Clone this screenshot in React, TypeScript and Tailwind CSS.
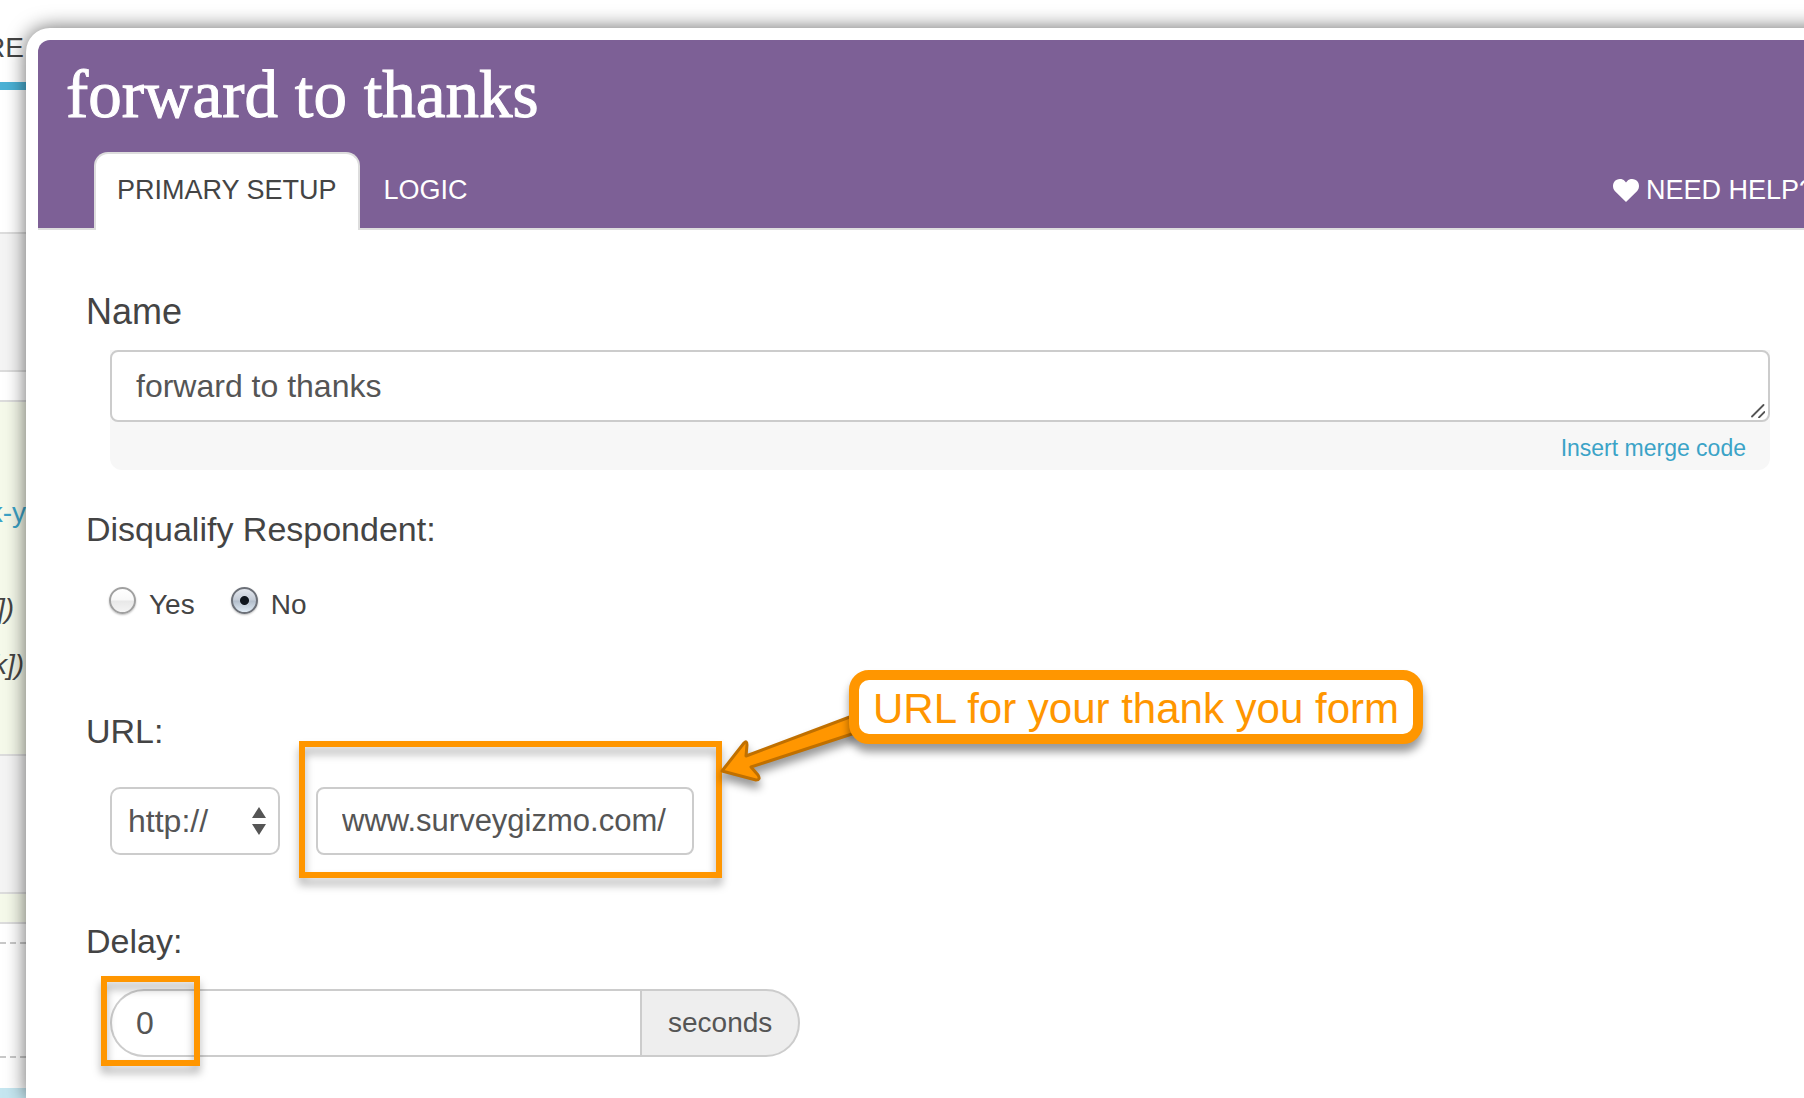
import React from "react";

const annotationShadow = "drop-shadow-[0_7px_4px_rgba(0,0,0,0.3)]";

function Rule() {
  return <div className="h-0.5 shrink-0 bg-[#dcdcdc]" />;
}

function PageBehind() {
  return (
    <aside className="flex w-[26px] shrink-0 flex-col overflow-hidden whitespace-nowrap text-[#444]">
      <div className="flex h-[82px] shrink-0 justify-end pt-7 pr-0.5 text-[28px] leading-10">SHARE</div>
      <div className="h-2 shrink-0 bg-[#4bb1d5]" />
      <div className="h-[142px] shrink-0" />
      <Rule />
      <div className="h-[136px] shrink-0 bg-[#f4f4f4]" />
      <Rule />
      <div className="h-7 shrink-0" />
      <Rule />
      <div className="flex h-[352px] shrink-0 flex-col items-end bg-[#f5f9ea] pt-[91px] text-[28px] leading-10">
        <a href="#thank-you" className="text-[#3ba3c7]">thank-y</a>
        <em className="mt-14 pr-3">link])</em>
        <em className="mt-4 pr-0.5">link])</em>
      </div>
      <Rule />
      <div className="h-[136px] shrink-0 bg-[#f4f4f4]" />
      <Rule />
      <div className="h-7 shrink-0 bg-[#f5f9ea]" />
      <Rule />
      <div className="mt-[18px] h-[116px] shrink-0 border-y-2 border-dashed border-[#c8c8c8]" />
      <div className="mt-[30px] min-h-2 flex-1 bg-[#c5e6f0]" />
    </aside>
  );
}

function Header() {
  return (
    <header className="rounded-tl-xl border-b-2 border-[#ddd] bg-[#7d6096] pt-[18px] text-white">
      <h1 className="pl-7 font-['Liberation_Serif',serif] text-[67px] leading-[72px] [-webkit-text-stroke:1px_white]">
        forward to thanks
      </h1>
      <nav className="-mb-0.5 mt-[22px] flex pl-14 pr-[18px] text-[27px] leading-[72px]">
        <button className="rounded-t-[14px] border-2 border-b-0 border-[#ddd] bg-white px-[21px] pb-1 text-[#444]">
          PRIMARY SETUP
        </button>
        <button className="border-t-2 border-transparent px-6 pb-1">LOGIC</button>
        <a href="#help" className="ml-auto flex items-center gap-[7px] border-t-2 border-transparent pb-1">
          <svg viewBox="0 0 26 23" className="h-[23px] w-[26px] fill-white" aria-hidden="true">
            <path d="M13 23 1.800 12C-.4 9.600-.6 5.500 1.300 2.800 3.700-.5 9-1 11.700 2L13 3.500 14.300 2C17-1 22.300-.5 24.700 2.800c1.900 2.700 1.700 6.800-.5 9.200z" />
          </svg>
          NEED HELP?
        </a>
      </nav>
    </header>
  );
}

function Radio({ label, defaultChecked }: { label: string; defaultChecked?: boolean }) {
  return (
    <label className="flex items-start gap-[13px] text-[28px] leading-10">
      <input
        type="radio"
        name="disqualify"
        defaultChecked={defaultChecked}
        className="mt-0.5 size-[27px] appearance-none rounded-full border-2 border-[#a0a0a0] bg-[linear-gradient(#fff_0%,#f8f8f8_48%,#e8e8e8_52%,#f4f4f4_100%)] shadow-[0_1px_2px_rgba(0,0,0,0.25)] checked:border-[#6c7078] checked:bg-[radial-gradient(circle,#10161e_0_4px,transparent_5px),linear-gradient(#e3e7ee_0%,#c3cbd6_48%,#b2bdca_52%,#e0ebf5_100%)]"
      />
      {label}
    </label>
  );
}

export default function App() {
  return (
    <div className="flex min-h-screen overflow-hidden bg-white font-['Liberation_Sans',Arial,sans-serif]">
      <PageBehind />
      <main className="-mr-10 mt-7 min-w-0 flex-1 rounded-tl-3xl bg-white p-3 pb-0 text-[#444] shadow-[0_0_20px_rgba(0,0,0,0.6)]">
        <Header />
        <form className="pt-[62px] pr-[62px] pb-8 pl-12 text-[34px] leading-10">
          <label htmlFor="name" className="block text-[36px]">Name</label>
          <div className="mt-[18px] ml-6 rounded-b-xl bg-[#f7f7f7]">
            <div className="relative">
              <textarea
                id="name"
                rows={1}
                defaultValue="forward to thanks"
                className="block h-[72px] w-full resize-none overflow-hidden rounded-lg border-2 border-[#ccc] bg-white px-6 py-4 text-[32px] leading-9 text-[#555]"
              />
              <svg viewBox="0 0 14 14" className="absolute right-[5px] bottom-1 size-3.5" aria-hidden="true">
                <path d="M1 12.500 12.500 1M8 13.500 13.500 8" stroke="#555" strokeWidth="1.800" strokeLinecap="round" />
              </svg>
            </div>
            <div className="flex h-12 items-center justify-end pt-1 pr-6 text-[23px] leading-7">
              <a href="#merge" className="text-[#3ba3c7]">Insert merge code</a>
            </div>
          </div>

          <div role="radiogroup" aria-labelledby="disqualify-label">
            <div id="disqualify-label" className="mt-[39px]">Disqualify Respondent:</div>
            <div className="mt-9 ml-[23px] flex gap-9">
              <Radio label="Yes" />
              <Radio label="No" defaultChecked />
            </div>
          </div>

          <label htmlFor="url" className="mt-[86px] block">URL:</label>
          <div className="mt-9 ml-6 flex gap-9 text-[32px] text-[#555]">
            <div className="relative">
              <select
                aria-label="Protocol"
                className="h-[68px] w-[170px] appearance-none rounded-[10px] border-2 border-[#ccc] bg-white pl-4"
              >
                <option>http://</option>
                <option>https://</option>
              </select>
              <svg viewBox="0 0 14 28" className="pointer-events-none absolute top-5 right-3.5 h-7 w-3.5 fill-[#555]" aria-hidden="true">
                <path d="M7 0 14 11H0zM0 17H14L7 28z" />
              </svg>
            </div>
            <div className="relative">
              <input
                id="url"
                type="text"
                defaultValue="www.surveygizmo.com/"
                className="h-[68px] w-[378px] rounded-lg border-2 border-[#ccc] bg-white px-6 text-[31px]"
              />
              <div className={"pointer-events-none absolute -top-[46px] -left-[17px] h-[137px] w-[423px] border-[6px] border-[#ff9600] " + annotationShadow} />
              <svg
                viewBox="0 0 140 70"
                className="pointer-events-none absolute -top-[74px] left-[402px] h-[70px] w-[140px] drop-shadow-[0_7px_4px_rgba(0,0,0,0.4)]"
                aria-hidden="true"
              >
                <path
                  d="M4 58 26 30Q29 27 29 32L28 43 137 2V20L33 54 40 62Q43 67 38 67Z"
                  fill="#ff9600"
                  stroke="#c07000"
                  strokeWidth="3"
                  strokeLinejoin="round"
                />
              </svg>
              <div className="absolute -top-[117px] left-[533px] rounded-[20px] border-10 border-[#ff9600] bg-white px-3.5 pt-1 text-[42px] leading-[50px] whitespace-nowrap text-[#ff9600] shadow-[0_8px_8px_rgba(0,0,0,0.4)]">
                URL for your thank you form
              </div>
            </div>
          </div>

          <label htmlFor="delay" className="mt-[66px] block">Delay:</label>
          <div className="relative mt-7 ml-6 flex text-[32px] text-[#555]">
            <input
              id="delay"
              type="text"
              defaultValue="0"
              className="h-[68px] w-[530px] rounded-l-full border-2 border-r-0 border-[#ccc] bg-white px-6"
            />
            <span className="flex items-center rounded-r-full border-2 border-[#ccc] bg-[#eee] px-[26px] text-[28px]">
              seconds
            </span>
            <div className={"pointer-events-none absolute -top-[13px] -left-[9px] h-[90px] w-[99px] border-[6px] border-[#ff9600] " + annotationShadow} />
          </div>
        </form>
      </main>
    </div>
  );
}
